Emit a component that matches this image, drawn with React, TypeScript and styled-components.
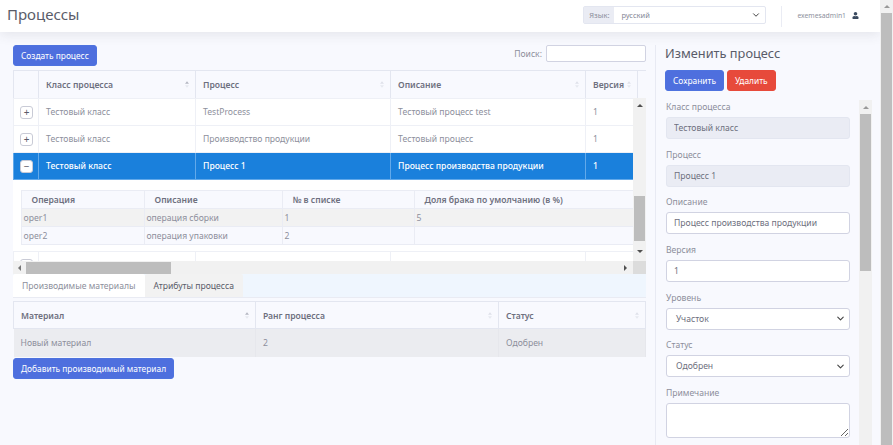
import React from "react";
import styled, { createGlobalStyle } from "styled-components";
import { ChevronDown } from "lucide-react";
import { FaUser } from "react-icons/fa";

const GlobalStyle = createGlobalStyle`
  html, body {
    margin: 0;
    height: 100%;
    overflow: hidden;
  }
  * {
    box-sizing: border-box;
  }
  body {
    font-family: "Noto Sans", "Open Sans", sans-serif;
    font-size: 8.6px;
    color: #8d8f9c;
  }
`;

const Page = styled.div`
  width: 893px;
  height: 445px;
  display: flex;
  overflow: hidden;
  background: #f8f9fe;
`;

const Main = styled.div`
  width: 880px;
  display: flex;
  flex-direction: column;
`;

const Header = styled.header`
  height: 32px;
  flex-shrink: 0;
  display: flex;
  align-items: center;
  background: #fff;
  padding: 0 21px 0 7px;
  box-shadow: 0 3px 12px rgba(58, 59, 69, 0.1);
`;

const Title = styled.h1`
  margin: 0 auto 4px 0;
  font-size: 15px;
  font-weight: 400;
  color: #5a5c69;
`;

const LangGroup = styled.div`
  width: 183px;
  height: 18px;
  display: flex;
  border: 1px solid #e3e6f0;
  border-radius: 2px;
  margin-bottom: 2px;
`;

const LangLabel = styled.span`
  width: 30px;
  display: flex;
  align-items: center;
  justify-content: center;
  background: #eaecf4;
  font-size: 7.5px;
`;

const LangValue = styled.span`
  flex: 1;
  display: flex;
  align-items: center;
  justify-content: space-between;
  padding: 0 4px 0 7px;
  font-size: 7.5px;
  color: #858796;
`;

const Divider = styled.div`
  width: 1px;
  height: 21px;
  margin: 0 15px;
  background: #eaecf4;
`;

const User = styled.div`
  display: flex;
  align-items: center;
  gap: 6px;
  font-size: 6.8px;
  margin-bottom: 2px;
  svg {
    color: #3a4a5f;
  }
`;

const Content = styled.div`
  flex: 1;
  display: flex;
  min-height: 0;
`;

const LeftColumn = styled.section`
  width: 655px;
  padding: 13px 9px 0 13px;
  display: flex;
  flex-direction: column;
`;

const Toolbar = styled.div`
  height: 25px;
  display: flex;
  justify-content: space-between;
  align-items: flex-start;
`;

const Button = styled.button<{ $variant?: "primary" | "danger" }>`
  height: 21px;
  padding: 0 7px;
  border: 1px solid ${(p) => (p.$variant === "danger" ? "#e74a3b" : "#4e73df")};
  border-radius: 3px;
  background: ${(p) => (p.$variant === "danger" ? "#e74a3b" : "#4e6fde")};
  color: #fff;
  font: inherit;
  font-size: 8.4px;
`;

const Search = styled.label`
  display: flex;
  align-items: center;
  gap: 4px;
`;

const SearchInput = styled.input`
  width: 100px;
  height: 17px;
  border: 1px solid #d1d3e2;
  border-radius: 2px;
  background: #fff;
`;

const TableFrame = styled.div`
  width: 633px;
  display: flex;
  flex-direction: column;
  border-top: 1px solid #e3e6f0;
`;

const HeaderClip = styled.div`
  height: 27px;
  overflow: hidden;
  background: #f8f9fe;
`;

const DataTable = styled.table<{ $width: number }>`
  width: ${(p) => p.$width}px;
  table-layout: fixed;
  border-collapse: collapse;
`;

const HeadCell = styled.th<{ $width?: number }>`
  width: ${(p) => (p.$width ? `${p.$width}px` : "auto")};
  height: 27px;
  padding: 1px 7px 0;
  text-align: left;
  font-size: 8.6px;
  font-weight: 600;
  color: #6e707e;
  border-right: 1px solid #e3e6f0;
  border-bottom: 1px solid #e3e6f0;
  border-left: 1px solid #e3e6f0;
`;

const HeadInner = styled.span`
  display: flex;
  align-items: center;
  justify-content: space-between;
`;

const SortMark = styled.svg.attrs({ viewBox: "0 0 6 10" })`
  width: 4px;
  height: 7px;
  flex-shrink: 0;
  margin-right: -1px;
`;

const Sort = ({ active }: { active?: boolean }) => (
  <SortMark>
    <path d="M3 0 6 4H0z" fill={active ? "#b5b7c2" : "#dfe1ea"} />
    <path d="M3 10 0 6h6z" fill="#e6e8ef" />
  </SortMark>
);

const BodyRow = styled.div`
  height: 163px;
  display: flex;
`;

const Viewport = styled.div`
  width: 620px;
  overflow: hidden;
  background: #fff;
`;

const Row = styled.tr<{ $selected?: boolean }>`
  background: ${(p) => (p.$selected ? "#1a80dc" : "#fff")};
  color: ${(p) => (p.$selected ? "#fff" : "#8d8f9c")};
  font-weight: ${(p) => (p.$selected ? 500 : 400)};
`;

const Cell = styled.td<{ $selected?: boolean }>`
  height: 27px;
  padding: 0 7px;
  font-size: 8.6px;
  white-space: nowrap;
  overflow: hidden;
  border: 1px solid ${(p) => (p.$selected ? "#62a9ea" : "#eef0f6")};
`;

const ExpandButton = styled.span<{ $open?: boolean }>`
  width: 13px;
  height: 13px;
  margin-left: -1px;
  display: flex;
  align-items: center;
  justify-content: center;
  border: 1px solid #c9cbd6;
  border-radius: 3px;
  background: #fff;
  color: #5a5c69;
  font-size: 10px;
  font-weight: 400;
  line-height: 1;
`;

const DetailCell = styled.td`
  height: 72px;
  padding: 10px 0 6px 7px;
  background: #fff;
  border-bottom: 1px solid #eef0f6;
  overflow: hidden;
`;

const InnerTable = styled.table`
  width: 613px;
  table-layout: fixed;
  border-collapse: collapse;
  background: #f8f9fe;
`;

const InnerHead = styled.th<{ $width?: number }>`
  width: ${(p) => (p.$width ? `${p.$width}px` : "auto")};
  height: 18px;
  padding: 0 10px;
  text-align: left;
  font-size: 8.6px;
  font-weight: 600;
  color: #6e707e;
  border: 1px solid #eaecf4;
`;

const InnerRow = styled.tr<{ $striped?: boolean }>`
  background: ${(p) => (p.$striped ? "#f2f2f2" : "#f8f9fe")};
`;

const InnerCell = styled.td`
  height: 18px;
  padding: 0 1px 0 2px;
  font-size: 8.6px;
  border-right: 1px solid #eaecf4;
  border-left: 1px solid #eaecf4;
  border-bottom: 1px solid #eaecf4;
`;

const VTrack = styled.div<{ $width?: number }>`
  width: ${(p) => p.$width ?? 13}px;
  flex-shrink: 0;
  display: flex;
  flex-direction: column;
  align-items: center;
  background: #f1f1f1;
  padding: 0 1px;
`;

const VThumb = styled.div<{ $top: number; $size: number }>`
  width: 100%;
  height: ${(p) => p.$size}px;
  flex-shrink: 0;
  margin-top: ${(p) => p.$top}px;
  margin-bottom: auto;
  background: #bdbdbd;
`;

const ArrowBox = styled.div<{ $long?: number }>`
  width: 13px;
  height: ${(p) => p.$long ?? 14}px;
  flex-shrink: 0;
  display: flex;
  align-items: center;
  justify-content: center;
`;

const Arrow = styled.i<{ $dir: "up" | "down" | "left" | "right"; $color?: string }>`
  display: block;
  width: 0;
  height: 0;
  border-style: solid;
  border-color: transparent;
  ${(p) => {
    const color = p.$color ?? "#505050";
    if (p.$dir === "up") return `border-width: 0 3.5px 3.5px; border-bottom-color: ${color};`;
    if (p.$dir === "down") return `border-width: 3.5px 3.5px 0; border-top-color: ${color};`;
    if (p.$dir === "left") return `border-width: 3.5px 3.5px 3.5px 0; border-right-color: ${color};`;
    return `border-width: 3.5px 0 3.5px 3.5px; border-left-color: ${color};`;
  }}
`;

const HTrack = styled.div`
  height: 13px;
  display: flex;
  align-items: center;
  background: #f1f1f1;
`;

const HThumb = styled.div`
  width: 145px;
  height: 12px;
  margin-right: auto;
  background: #bdbdbd;
`;

const Corner = styled.div`
  width: 13px;
  height: 13px;
  margin-left: 1px;
  background: #dcdcdc;
`;

const TabStrip = styled.nav`
  height: 24px;
  width: 633px;
  display: flex;
  background: #eff6fe;
  border-bottom: 1px solid #e9ebf3;
`;

const Tab = styled.div<{ $active?: boolean }>`
  display: flex;
  align-items: center;
  padding: 0 9px;
  border-radius: 2px 2px 0 0;
  font-size: 8.6px;
  background: ${(p) => (p.$active ? "#fff" : "#f2f2f2")};
  color: ${(p) => (p.$active ? "#8d8f9c" : "#5a5c69")};
`;

const MaterialTable = styled.table`
  width: 633px;
  margin-top: 3px;
  table-layout: fixed;
  border-collapse: collapse;
  border-top: 1px solid #e3e6f0;
`;

const MaterialRow = styled.tr`
  background: #ebecf0;
`;

const MaterialCell = styled.td`
  height: 28px;
  padding: 0 7px;
  font-size: 8.6px;
  border-right: 1px solid #e6e7ec;
`;

const AddRow = styled.div`
  margin-top: 1px;
`;

const RightColumn = styled.aside`
  flex: 1;
  min-width: 0;
  margin-top: 13px;
  padding-left: 9px;
  border-left: 1px solid #e8eaf3;
  display: flex;
  flex-direction: column;
`;

const PanelTitle = styled.h2`
  height: 25px;
  margin: -1px 0 1px;
  font-size: 12.8px;
  line-height: 18px;
  font-weight: 400;
  color: #5a5c69;
`;

const PanelButtons = styled.div`
  display: flex;
  gap: 3px;
  margin-bottom: 9px;
`;

const FormArea = styled.div`
  flex: 1;
  min-height: 0;
  display: flex;
  justify-content: space-between;
  padding-right: 8px;
  overflow: hidden;
`;

const Form = styled.form`
  width: 186px;
  padding: 0 1px;
`;

const Field = styled.div`
  height: 47.7px;
`;

const FieldLabel = styled.label`
  display: block;
  height: 17px;
  padding-top: 1px;
  font-size: 8.6px;
  line-height: 13px;
`;

const TextInput = styled.input<{ $disabled?: boolean }>`
  display: block;
  width: 184px;
  height: 22px;
  padding: 0 7px;
  border: 1px solid ${(p) => (p.$disabled ? "#e3e6f0" : "#d1d3e2")};
  border-radius: 3px;
  background: ${(p) => (p.$disabled ? "#eaecf4" : "#fff")};
  color: #6e707e;
  font: inherit;
  font-size: 8.6px;
`;

const SelectBox = styled.div`
  width: 184px;
  height: 22px;
  display: flex;
  align-items: center;
  justify-content: space-between;
  padding: 0 3px 0 9px;
  border: 1px solid #d1d3e2;
  border-radius: 3px;
  background: #fff;
  color: #6e707e;
`;

const Notes = styled.textarea`
  display: block;
  width: 184px;
  height: 35px;
  border: 1px solid #d1d3e2;
  border-radius: 3px;
  background: #fff;
`;

const processes = [
  { name: "TestProcess", about: "Тестовый процесс test" },
  { name: "Производство продукции", about: "Тестовый процесс" },
];

const columns = [
  { title: "", width: 25 },
  { title: "Класс процесса", width: 157, active: true },
  { title: "Процесс", width: 195 },
  { title: "Описание", width: 195 },
  { title: "Версия", width: 52 },
  { title: "", width: 36 },
];

function App() {
  return (
    <Page>
      <GlobalStyle />
      <Main>
        <Header>
          <Title>Процессы</Title>
          <LangGroup>
            <LangLabel>Язык:</LangLabel>
            <LangValue>
              русский
              <ChevronDown size={10} color="#444" strokeWidth={2.4} />
            </LangValue>
          </LangGroup>
          <Divider />
          <User>
            exemesadmin1
            <FaUser size={7} />
          </User>
        </Header>
        <Content>
          <LeftColumn>
            <Toolbar>
              <Button>Создать процесс</Button>
              <Search>
                Поиск:
                <SearchInput />
              </Search>
            </Toolbar>
            <TableFrame>
              <HeaderClip>
                <DataTable $width={660}>
                  <thead>
                    <tr>
                      {columns.map((c, i) => (
                        <HeadCell key={i} $width={c.width}>
                          {c.title && (
                            <HeadInner>
                              {c.title}
                              <Sort active={c.active} />
                            </HeadInner>
                          )}
                        </HeadCell>
                      ))}
                    </tr>
                  </thead>
                </DataTable>
              </HeaderClip>
              <BodyRow>
                <Viewport>
                  <DataTable $width={660}>
                    <colgroup>
                      {columns.map((c, i) => (
                        <col key={i} width={c.width} />
                      ))}
                    </colgroup>
                    <tbody>
                      {processes.map((p) => (
                        <Row key={p.name}>
                          <Cell>
                            <ExpandButton>+</ExpandButton>
                          </Cell>
                          <Cell>Тестовый класс</Cell>
                          <Cell>{p.name}</Cell>
                          <Cell>{p.about}</Cell>
                          <Cell>1</Cell>
                          <Cell />
                        </Row>
                      ))}
                      <Row $selected>
                        <Cell $selected>
                          <ExpandButton $open>−</ExpandButton>
                        </Cell>
                        <Cell $selected>Тестовый класс</Cell>
                        <Cell $selected>Процесс 1</Cell>
                        <Cell $selected>Процесс производства продукции</Cell>
                        <Cell $selected>1</Cell>
                        <Cell $selected />
                      </Row>
                      <tr>
                        <DetailCell colSpan={6}>
                          <InnerTable>
                            <thead>
                              <tr>
                                <InnerHead $width={123}>Операция</InnerHead>
                                <InnerHead $width={138}>Описание</InnerHead>
                                <InnerHead $width={132}>№ в списке</InnerHead>
                                <InnerHead>Доля брака по умолчанию (в %)</InnerHead>
                              </tr>
                            </thead>
                            <tbody>
                              <InnerRow $striped>
                                <InnerCell>oper1</InnerCell>
                                <InnerCell>операция сборки</InnerCell>
                                <InnerCell>1</InnerCell>
                                <InnerCell>5</InnerCell>
                              </InnerRow>
                              <InnerRow>
                                <InnerCell>oper2</InnerCell>
                                <InnerCell>операция упаковки</InnerCell>
                                <InnerCell>2</InnerCell>
                                <InnerCell />
                              </InnerRow>
                            </tbody>
                          </InnerTable>
                        </DetailCell>
                      </tr>
                      <Row>
                        <Cell>
                          <ExpandButton />
                        </Cell>
                        <Cell />
                        <Cell />
                        <Cell />
                        <Cell />
                        <Cell />
                      </Row>
                    </tbody>
                  </DataTable>
                </Viewport>
                <VTrack>
                  <ArrowBox $long={14}>
                    <Arrow $dir="up" />
                  </ArrowBox>
                  <VThumb $top={84} $size={45} />
                  <ArrowBox $long={20}>
                    <Arrow $dir="down" />
                  </ArrowBox>
                </VTrack>
              </BodyRow>
              <HTrack>
                <ArrowBox>
                  <Arrow $dir="left" $color="#777" />
                </ArrowBox>
                <HThumb />
                <ArrowBox>
                  <Arrow $dir="right" />
                </ArrowBox>
                <Corner />
              </HTrack>
            </TableFrame>
            <TabStrip>
              <Tab $active>Производимые материалы</Tab>
              <Tab>Атрибуты процесса</Tab>
            </TabStrip>
            <MaterialTable>
              <thead>
                <tr>
                  <HeadCell $width={242}>
                    <HeadInner>
                      Материал
                      <Sort active />
                    </HeadInner>
                  </HeadCell>
                  <HeadCell $width={243}>
                    <HeadInner>
                      Ранг процесса
                      <Sort />
                    </HeadInner>
                  </HeadCell>
                  <HeadCell>
                    <HeadInner>
                      Статус
                      <Sort />
                    </HeadInner>
                  </HeadCell>
                </tr>
              </thead>
              <tbody>
                <MaterialRow>
                  <MaterialCell>Новый материал</MaterialCell>
                  <MaterialCell>2</MaterialCell>
                  <MaterialCell>Одобрен</MaterialCell>
                </MaterialRow>
              </tbody>
            </MaterialTable>
            <AddRow>
              <Button>Добавить производимый материал</Button>
            </AddRow>
          </LeftColumn>
          <RightColumn>
            <PanelTitle>Изменить процесс</PanelTitle>
            <PanelButtons>
              <Button>Сохранить</Button>
              <Button $variant="danger">Удалить</Button>
            </PanelButtons>
            <FormArea>
              <Form>
                <Field>
                  <FieldLabel>Класс процесса</FieldLabel>
                  <TextInput $disabled readOnly value="Тестовый класс" />
                </Field>
                <Field>
                  <FieldLabel>Процесс</FieldLabel>
                  <TextInput $disabled readOnly value="Процесс 1" />
                </Field>
                <Field>
                  <FieldLabel>Описание</FieldLabel>
                  <TextInput readOnly value="Процесс производства продукции" />
                </Field>
                <Field>
                  <FieldLabel>Версия</FieldLabel>
                  <TextInput readOnly value="1" />
                </Field>
                <Field>
                  <FieldLabel>Уровень</FieldLabel>
                  <SelectBox>
                    Участок
                    <ChevronDown size={11} color="#444" strokeWidth={2.4} />
                  </SelectBox>
                </Field>
                <Field>
                  <FieldLabel>Статус</FieldLabel>
                  <SelectBox>
                    Одобрен
                    <ChevronDown size={11} color="#444" strokeWidth={2.4} />
                  </SelectBox>
                </Field>
                <Field>
                  <FieldLabel>Примечание</FieldLabel>
                  <Notes />
                </Field>
              </Form>
              <VTrack>
                <ArrowBox $long={14}>
                  <Arrow $dir="up" $color="#999" />
                </ArrowBox>
                <VThumb $top={0} $size={157} />
              </VTrack>
            </FormArea>
          </RightColumn>
        </Content>
      </Main>
      <VTrack $width={13}>
        <ArrowBox $long={13}>
          <Arrow $dir="up" $color="#999" />
        </ArrowBox>
        <VThumb $top={0} $size={432} />
      </VTrack>
    </Page>
  );
}

export default App;
